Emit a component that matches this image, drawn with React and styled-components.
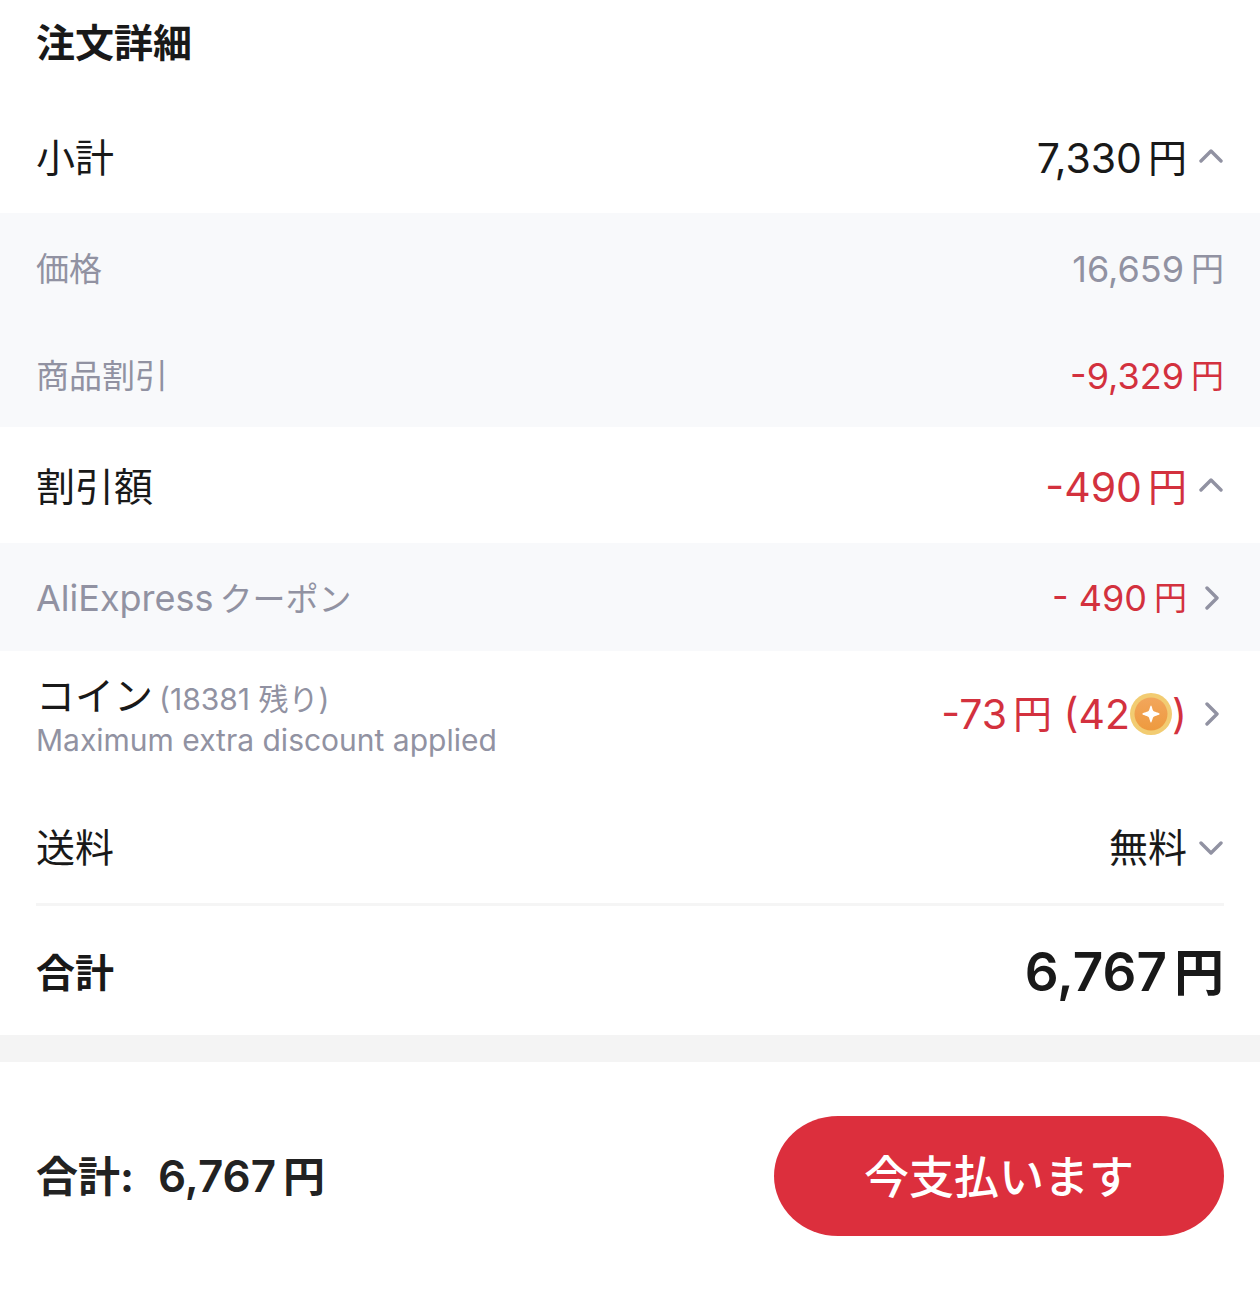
import React from "react";
import styled, { createGlobalStyle, css } from "styled-components";

const GlobalStyle = createGlobalStyle`
  *, *::before, *::after { box-sizing: border-box; }
  body {
    margin: 0;
    background: #fff;
    color: #191919;
    font-family: Inter, "Noto Sans CJK JP", sans-serif;
  }
  h1 { margin: 0; }
  button {
    font: inherit;
    color: inherit;
    border: 0;
    padding: 0;
    background: none;
    cursor: pointer;
  }
`;

const Page = styled.main`
  display: flex;
  flex-direction: column;
`;

const Heading = styled.h1`
  padding: 14px 36px 30px;
  font-size: 39px;
  line-height: 58px;
  font-weight: 700;
`;

const Row = styled.div`
  display: flex;
  align-items: center;
  justify-content: space-between;
  min-height: ${(p) => p.$height}px;
  padding: ${(p) => p.$top || 0}px 36px 0;
  background: ${(p) => (p.$shaded ? "#f8f9fb" : "#fff")};
`;

const Label = styled.span`
  display: flex;
  align-items: baseline;
  gap: 6px;
  font-size: ${(p) => (p.$sub ? 33 : 39)}px;
  line-height: 56px;
  font-weight: ${(p) => (p.$bold ? 700 : 400)};
  color: ${(p) => (p.$sub ? "#9192a2" : "#191919")};
`;

const Brand = styled.span`
  font-size: 36px;
`;

const amount = css`
  display: flex;
  align-items: center;
  font-size: ${(p) => (p.$sub ? 36 : p.$word ? 39 : 41)}px;
  line-height: 56px;
  color: ${(p) => (p.$red ? "#d3313e" : p.$sub ? "#9192a2" : "#191919")};
`;

const Amount = styled.span`
  ${amount}
`;

const AmountButton = styled.button`
  ${amount}
`;

const Yen = styled.span`
  margin-left: ${(p) => (p.$size === 39 ? 6 : 7)}px;
  font-size: ${(p) => p.$size}px;
`;

const Icon = styled.svg`
  display: block;
  width: 24px;
  height: 24px;
  margin: 0 1px 0 12px;
  fill: none;
  stroke: #9192a2;
  stroke-width: 3.4;
  stroke-linecap: round;
  stroke-linejoin: round;
`;

const CoinIcon = styled.svg`
  display: block;
  width: 42px;
  height: 42px;
`;

const CoinRow = styled(Row)`
  padding-bottom: 13px;
`;

const CoinText = styled.div`
  display: flex;
  flex-direction: column;
  padding-top: 4px;
`;

const CoinTitle = styled.div`
  display: flex;
  align-items: baseline;
  gap: 6px;
  font-size: 39px;
  line-height: 48px;
`;

const Small = styled.span`
  font-size: 30px;
  line-height: 40px;
  color: #9192a2;
`;

const Divider = styled.hr`
  width: calc(100% - 72px);
  height: 3px;
  margin: 0 36px;
  border: 0;
  background: #f5f5f5;
`;

const Band = styled.div`
  height: 27px;
  background: #f4f4f4;
`;

const Total = styled.strong`
  font-size: 53px;
  line-height: 72px;
  font-weight: 600;
`;

const Footer = styled.footer`
  display: flex;
  align-items: center;
  justify-content: space-between;
  padding: 54px 36px 67px;
`;

const FooterTotal = styled.div`
  display: flex;
  align-items: baseline;
  gap: 24px;
  font-size: 44px;
  line-height: 60px;
  font-weight: 600;
  color: #222;
`;

const FooterLabel = styled.span`
  font-size: 42px;
  font-weight: 700;
`;

const PayButton = styled.button`
  width: 450px;
  height: 120px;
  padding-bottom: 3px;
  border-radius: 64px / 60px;
  background: #dc2f3d;
  color: #fff;
  font-size: 45px;
  font-weight: 500;
`;

const paths = {
  up: "M2 15 12 5l10 10",
  down: "M2 7l10 10L22 7",
  right: "M8 2l10 10L8 22",
};

function Chevron({ to }) {
  return (
    <Icon viewBox="0 0 24 24" aria-hidden="true">
      <path d={paths[to]} />
    </Icon>
  );
}

function Coin() {
  return (
    <CoinIcon viewBox="0 0 42 42" role="img" aria-label="コイン">
      <defs>
        <linearGradient id="coin-face" x1="0" y1="0" x2="0" y2="1">
          <stop offset="0" stopColor="#f2a65c" />
          <stop offset="1" stopColor="#ee9a3e" />
        </linearGradient>
      </defs>
      <circle cx="21" cy="21" r="21" fill="#f2cc72" />
      <circle cx="21" cy="21" r="16.5" fill="url(#coin-face)" />
      <path
        d="M21 12.5c.8 0 1.2 3.600 2.400 5.600 2 1.200 6.300 1.900 6.300 2.900s-4.300 1.700-6.300 2.900c-1.200 2-1.600 5.600-2.400 5.600s-1.200-3.600-2.400-5.600c-2-1.200-6.300-1.900-6.300-2.900s4.300-1.700 6.300-2.900c1.200-2 1.600-5.600 2.400-5.600z"
        fill="#fff"
      />
    </CoinIcon>
  );
}

function Line({ label, value, word, height, top, shaded, sub, red, chevron }) {
  const Value = chevron ? AmountButton : Amount;
  return (
    <Row $height={height} $top={top} $shaded={shaded}>
      <Label $sub={sub}>{label}</Label>
      <Value $sub={sub} $red={red} $word={word} {...(chevron ? { type: "button" } : {})}>
        {value}
        {!word && <Yen $size={sub ? 33 : 39}>円</Yen>}
        {chevron && <Chevron to={chevron} />}
      </Value>
    </Row>
  );
}

export default function App() {
  return (
    <>
      <GlobalStyle />
      <Page>
        <Heading>注文詳細</Heading>
        <Line label="小計" value="7,330" height={111} chevron="up" />
        <Line label="価格" value="16,659" height={107} top={4} shaded sub />
        <Line label="商品割引" value="-9,329" height={107} top={4} shaded sub red />
        <Line label="割引額" value="-490" height={116} top={4} red chevron="up" />
        <Line
          label={
            <>
              <Brand>AliExpress</Brand>
              <span>クーポン</span>
            </>
          }
          value="- 490"
          height={108}
          top={2}
          shaded
          sub
          red
          chevron="right"
        />
        <CoinRow $height={139}>
          <CoinText>
            <CoinTitle>
              コイン<Small>(18381 残り)</Small>
            </CoinTitle>
            <Small>Maximum extra discount applied</Small>
          </CoinText>
          <AmountButton type="button" $red>
            -73<Yen $size={39}>円</Yen>&nbsp;(42
            <Coin />)
            <Chevron to="right" />
          </AmountButton>
        </CoinRow>
        <Line label="送料" value="無料" word height={113} top={2} chevron="down" />
        <Divider />
        <Row $height={129} $top={4}>
          <Label $bold>合計</Label>
          <Total>
            6,767<Yen $size={50}>円</Yen>
          </Total>
        </Row>
        <Band />
        <Footer>
          <FooterTotal>
            <FooterLabel>合計:</FooterLabel>
            <span>
              6,767<Yen $size={42}>円</Yen>
            </span>
          </FooterTotal>
          <PayButton type="button">今支払います</PayButton>
        </Footer>
      </Page>
    </>
  );
}
